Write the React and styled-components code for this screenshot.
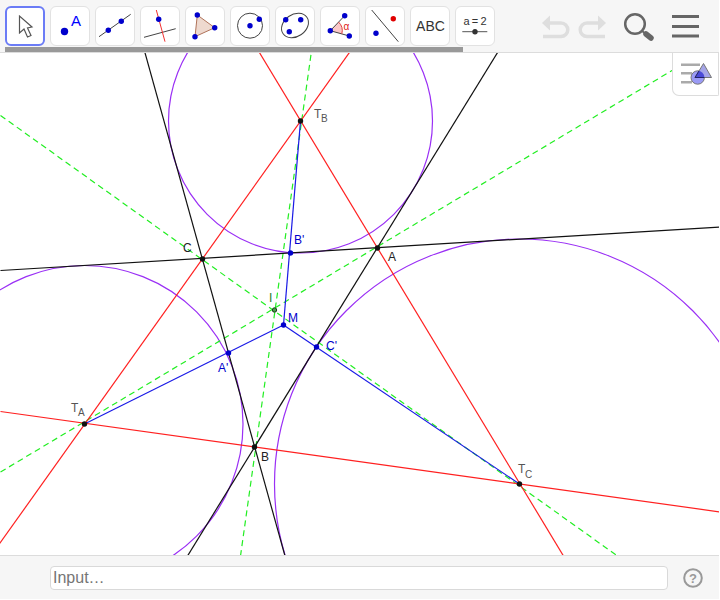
import React from 'react';
import styled, { createGlobalStyle } from 'styled-components';

const GlobalStyle = createGlobalStyle`
	html, body {
		margin: 0;
		padding: 0;
		background: #fff;
		font-family: 'Liberation Sans', Arial, sans-serif;
	}
`;

const Page = styled.div`
	display: flex;
	flex-direction: column;
	width: 719px;
	height: 599px;
	overflow: hidden;
`;

const Toolbar = styled.div`
	display: flex;
	flex-direction: column;
	flex: none;
	box-sizing: border-box;
	height: 53px;
	padding-top: 6px;
	background: #f6f6f6;
	border-bottom: 1px solid #dcdcdc;
`;

const ToolRow = styled.div`
	display: flex;
	align-items: center;
	height: 40px;
	padding-left: 5px;
`;

const Tools = styled.div`
	display: flex;
	gap: 5px;
`;

const Tool = styled.div`
	box-sizing: border-box;
	width: 40px;
	height: 40px;
	background: #fff;
	border-radius: 6px;
	border: ${(p) => (p.$active ? '2px solid #6b7cf6' : '1px solid #e2e2e2')};
	overflow: hidden;
`;

const ToolIcon = styled.svg`
	display: block;
	width: 40px;
	height: 40px;
	margin: ${(p) => (p.$active ? '-2px' : '-1px')};
`;

const Actions = styled.div`
	display: flex;
	align-items: center;
	margin-left: 47px;
`;

const ActionIcon = styled.svg`
	display: block;
	flex: none;
	margin-left: ${(p) => p.$gap || 0}px;
`;

const ScrollBar = styled.div`
	width: 458px;
	height: 5px;
	margin: 1px 0 0 5px;
	background: #999;
`;

const Canvas = styled.div`
	position: relative;
	flex: 1;
	min-height: 0;
	background: #fff;
`;

const Drawing = styled.svg`
	display: block;
	width: 719px;
	height: 502px;
	font-family: 'Liberation Sans', Arial, sans-serif;
`;

const StyleButton = styled.div`
	position: absolute;
	top: 0;
	right: 0;
	box-sizing: border-box;
	width: 47px;
	height: 43px;
	background: #fff;
	border: 1px solid #dcdcdc;
	border-top: none;
	border-bottom-left-radius: 7px;
	border-bottom-right-radius: 2px;
`;

const InputBar = styled.div`
	display: flex;
	align-items: center;
	flex: none;
	box-sizing: border-box;
	height: 44px;
	padding: 0 16px 0 50px;
	gap: 15px;
	background: #f6f6f6;
	border-top: 1px solid #dcdcdc;
`;

const InputBox = styled.div`
	flex: 1;
	box-sizing: border-box;
	height: 24px;
	padding-left: 2px;
	line-height: 22px;
	font-size: 16px;
	color: #757575;
	background: #fff;
	border: 1px solid #d9d9d9;
	border-radius: 4px;
`;

const HelpIcon = styled.svg`
	display: block;
	flex: none;
`;

const Blue = '#0000cc';

const Dot = ({ x, y, fill = Blue, r = 2.7 }) => (
	<circle cx={x} cy={y} r={r} fill={fill} />
);

const toolIcons = [
	<polygon points="13.5,10 13.5,27 18,23 21.5,31 25,29.5 21.5,22 26,21" fill="#fff" stroke="#555" strokeWidth="1.2" />,
	<>
		<Dot x={13.5} y={25.5} r={3.7} />
		<text x={25} y={20} textAnchor="middle" fontSize="15" fontFamily="Liberation Sans" fill="#0000ff">A</text>
	</>,
	<>
		<line x1="3" y1="30.7" x2="34.7" y2="8.3" stroke="#444" />
		<Dot x={12.3} y={24.3} />
		<Dot x={25.3} y={15.3} />
	</>,
	<>
		<line x1="3" y1="31.3" x2="34.7" y2="22.7" stroke="#444" />
		<line x1="15.3" y1="4" x2="24" y2="35.7" stroke="#f03030" />
		<Dot x={17.7} y={13.3} />
	</>,
	<>
		<polygon points="11.3,9 28.7,21.7 9,30.7" fill="#eed9cf" stroke="#b0735a" />
		<Dot x={11.3} y={9} />
		<Dot x={28.7} y={21.7} />
		<Dot x={9} y={30.7} />
	</>,
	<>
		<circle cx="19" cy="19.7" r="12.5" fill="none" stroke="#444" />
		<Dot x={19} y={19.7} />
		<Dot x={28.3} y={13.3} />
	</>,
	<>
		<ellipse cx="19" cy="19.5" rx="14.5" ry="11" transform="rotate(-35 19 19.5)" fill="none" stroke="#444" />
		<Dot x={9.7} y={13.7} />
		<Dot x={24.7} y={13.7} />
		<Dot x={13.3} y={25.7} />
	</>,
	<>
		<path d="M9.3 24.7 L17.5 16 A12 12 0 0 1 20.8 27.9 Z" fill="#fbc8c8" />
		<polyline points="23.7,9.7 9.3,24.7 28.3,30" fill="none" stroke="#444" />
		<path d="M17.5 16 A12 12 0 0 1 20.8 27.9" fill="none" stroke="#e04040" />
		<text x={22.5} y={23.5} fontSize="10" fontFamily="Liberation Sans" fill="#e02020">α</text>
		<Dot x={9.3} y={24.7} />
		<Dot x={23.7} y={9.7} />
		<Dot x={28.3} y={30} />
	</>,
	<>
		<line x1="5.7" y1="4" x2="32.3" y2="35.7" stroke="#444" />
		<Dot x={27.3} y={12.7} fill="#e00000" />
		<Dot x={10} y={27.3} />
	</>,
	<text x={19.5} y={24.5} textAnchor="middle" fontSize="14" fontFamily="Liberation Sans" fill="#333">ABC</text>,
	<>
		<text x={19} y={19} textAnchor="middle" fontSize="11" wordSpacing="-0.8" fontFamily="Liberation Sans" fill="#333">a = 2</text>
		<line x1="6.3" y1="25.7" x2="31.3" y2="25.7" stroke="#555" />
		<Dot x={19} y={25.7} fill="#333" />
	</>,
];

// figure coordinates are page pixels, viewBox starts under the toolbar
const A = [377, 248];
const B = [254, 447];
const C = [202, 259];
const TA = [84, 424];
const TB = [300, 121];
const TC = [519, 484];
const Ap = [228, 353];
const Bp = [290, 253];
const Cp = [316, 347];
const M = [283, 325];
const I = [274, 310];

const redLines = [
	[[-9, 555], [350, 51]],
	[[258, 51], [563, 556]],
	[[0, 411.5], [720, 512]],
];
const blackLines = [
	[[187, 556], [498, 51]],
	[[144, 51], [284.5, 556]],
	[[0, 270.5], [720, 227]],
];
const greenLines = [
	[[0, 472], [674, 69]],
	[[240, 556], [311, 51]],
	[[0, 115.5], [617, 556]],
];
const blueLines = [
	[TA, M],
	[TB, M],
	[TC, M],
];

const Seg = ({ seg, ...rest }) => (
	<line x1={seg[0][0]} y1={seg[0][1]} x2={seg[1][0]} y2={seg[1][1]} {...rest} />
);

const labels = [
	{ x: 183, y: 252, t: 'C', c: '#222' },
	{ x: 388, y: 261, t: 'A', c: '#222' },
	{ x: 261, y: 461, t: 'B', c: '#222' },
	{ x: 294, y: 244, t: "B'", c: Blue },
	{ x: 288, y: 322, t: 'M', c: Blue },
	{ x: 326, y: 350, t: "C'", c: Blue },
	{ x: 218, y: 372, t: "A'", c: Blue },
	{ x: 269, y: 302, t: 'I', c: '#2a7a2a' },
];

const subLabels = [
	{ x: 71, y: 412, t: 'T', sx: 78, sy: 416, s: 'A' },
	{ x: 314, y: 118, t: 'T', sx: 321, sy: 122, s: 'B' },
	{ x: 518, y: 473, t: 'T', sx: 525, sy: 478, s: 'C' },
];

const Figure = () => (
	<Drawing viewBox="0 53 719 502">
		<g transform="translate(0.5 0)">
			<g fill="none" stroke="#9a2ff5" strokeWidth="1.2">
				<circle cx={TA[0]} cy={TA[1]} r={158.5} />
				<circle cx={TB[0]} cy={TB[1]} r={132} />
				<circle cx={TC[0]} cy={TC[1]} r={245} />
			</g>
			<g stroke="#22ee22" strokeWidth="1.2" strokeDasharray="6 4">
				{greenLines.map((s, i) => <Seg key={i} seg={s} />)}
			</g>
			<g stroke="#ff2020" strokeWidth="1.2">
				{redLines.map((s, i) => <Seg key={i} seg={s} />)}
			</g>
			<g stroke="#111" strokeWidth="1.2">
				{blackLines.map((s, i) => <Seg key={i} seg={s} />)}
			</g>
			<g stroke="#1a1ae6" strokeWidth="1.2">
				{blueLines.map((s, i) => <Seg key={i} seg={s} />)}
			</g>
			{[A, B, C, TA, TB, TC].map((p, i) => <Dot key={i} x={p[0]} y={p[1]} fill="#111" />)}
			{[Ap, Bp, Cp, M].map((p, i) => <Dot key={i} x={p[0]} y={p[1]} />)}
			<circle cx={I[0]} cy={I[1]} r={2.2} fill="#4c9a4c" stroke="#1a3a1a" strokeWidth="1" />
		</g>
		{labels.map((l) => (
			<text key={l.t} x={l.x} y={l.y} fontSize="12" fill={l.c}>{l.t}</text>
		))}
		{subLabels.map((l) => (
			<g key={l.s} fill="#555">
				<text x={l.x} y={l.y} fontSize="12">{l.t}</text>
				<text x={l.sx} y={l.sy} fontSize="10">{l.s}</text>
			</g>
		))}
	</Drawing>
);

const App = () => (
	<Page>
		<GlobalStyle />
		<Toolbar>
			<ToolRow>
				<Tools>
					{toolIcons.map((icon, i) => (
						<Tool key={i} $active={i === 0}>
							<ToolIcon viewBox="-1 0 40 40" $active={i === 0}>{icon}</ToolIcon>
						</Tool>
					))}
				</Tools>
				<Actions>
					<ActionIcon width="28" height="26" viewBox="0 0 28 26">
						<path d="M0 10 L8 2.5 L8 17.5 Z" fill="#dedede" />
						<path d="M7 10 H19 A6.8 6.8 0 0 1 19 23.6 H1" fill="none" stroke="#dedede" strokeWidth="3.5" />
					</ActionIcon>
					<ActionIcon $gap={8} width="28" height="26" viewBox="0 0 28 26">
						<path d="M28 10 L20 2.5 L20 17.5 Z" fill="#dedede" />
						<path d="M21 10 H9 A6.8 6.8 0 0 0 9 23.6 H27" fill="none" stroke="#dedede" strokeWidth="3.5" />
					</ActionIcon>
					<ActionIcon $gap={17} width="32" height="32" viewBox="0 0 32 32">
						<circle cx="12" cy="14" r="9.8" fill="none" stroke="#666" strokeWidth="2.5" />
						<line x1="19" y1="21" x2="23" y2="24" stroke="#666" strokeWidth="2" />
						<line x1="23" y1="24" x2="28" y2="28" stroke="#666" strokeWidth="5.5" strokeLinecap="round" />
					</ActionIcon>
					<ActionIcon $gap={17} width="27" height="26" viewBox="0 0 27 26">
						<rect x="0" y="2" width="27" height="3" fill="#666" />
						<rect x="0" y="12" width="27" height="3" fill="#666" />
						<rect x="0" y="21.5" width="27" height="3" fill="#666" />
					</ActionIcon>
				</Actions>
			</ToolRow>
			<ScrollBar />
		</Toolbar>
		<Canvas>
			<Figure />
			<StyleButton>
				<svg width="45" height="42" viewBox="1 0 45 42">
					<defs>
						<clipPath id="style-overlap">
							<circle cx="25.7" cy="24.5" r="6.7" />
						</clipPath>
					</defs>
					<rect x="9" y="10.5" width="19" height="2.5" fill="#aaa" />
					<rect x="9" y="19" width="11" height="2.5" fill="#aaa" />
					<rect x="9" y="28" width="11" height="2.5" fill="#aaa" />
					<circle cx="25.7" cy="24.5" r="6.7" fill="#9a9af5" stroke="#777" />
					<polygon points="31.5,10.5 23,24.5 39.5,24.5" fill="#a5a5e8" stroke="#777" />
					<polygon points="31.5,10.5 23,24.5 39.5,24.5" fill="#4a4ad8" stroke="#222266" clipPath="url(#style-overlap)" />
				</svg>
			</StyleButton>
		</Canvas>
		<InputBar>
			<InputBox>Input…</InputBox>
			<HelpIcon width="20" height="20" viewBox="0 0 20 20">
				<circle cx="10" cy="10" r="8.8" fill="none" stroke="#999" strokeWidth="2" />
				<text x="10" y="14.5" textAnchor="middle" fontSize="13" fontWeight="700" fontFamily="Liberation Sans" fill="#999">?</text>
			</HelpIcon>
		</InputBar>
	</Page>
);

export default App;
